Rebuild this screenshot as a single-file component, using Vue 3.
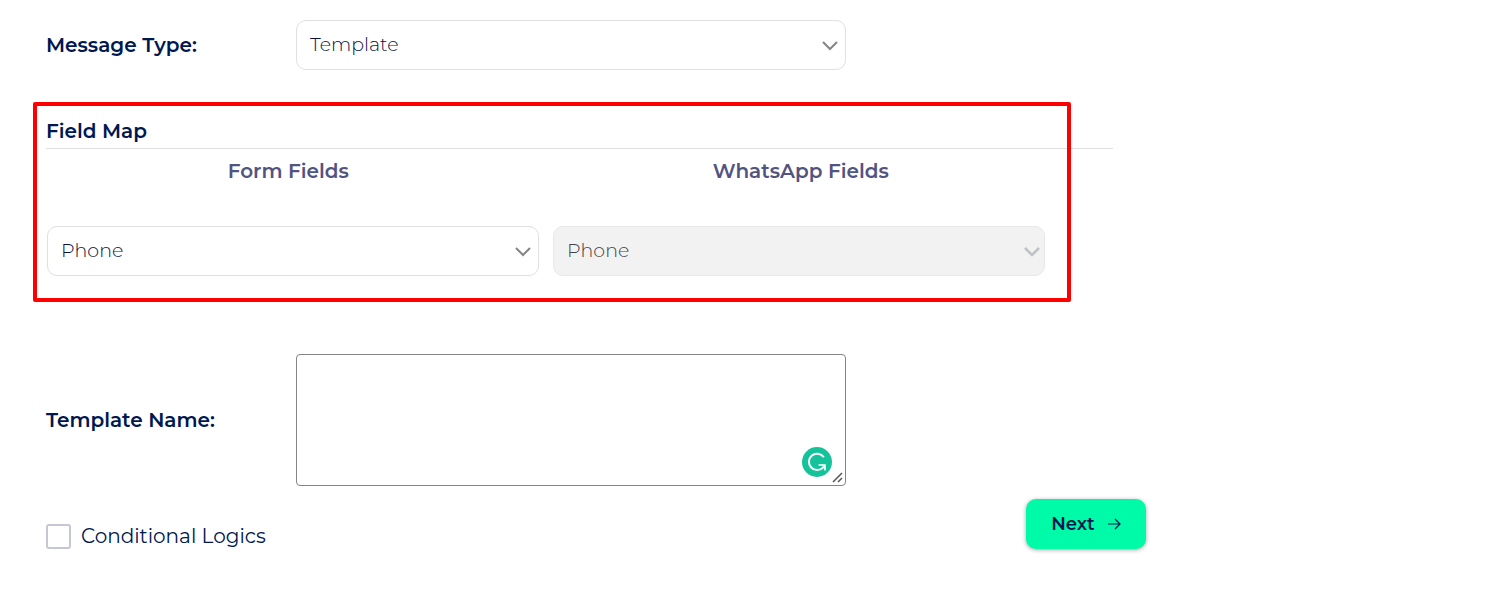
<script setup>
import { ref } from 'vue'

const messageType = ref('template')
const formField = ref('phone')
const whatsappField = ref('phone')
const templateName = ref('')
const conditional = ref(false)
</script>

<template>
  <form class="page" @submit.prevent>
    <div class="row">
      <label class="label" for="message-type">Message Type:</label>
      <div class="control">
        <select id="message-type" v-model="messageType" class="select">
          <option value="template">Template</option>
        </select>
        <svg class="chevron" viewBox="0 0 16 10" aria-hidden="true"><path d="M1 1l7 7 7-7" /></svg>
      </div>
    </div>

    <section class="map">
      <h2 class="title">Field Map</h2>
      <div class="heads">
        <label for="form-field">Form Fields</label>
        <label for="whatsapp-field">WhatsApp Fields</label>
      </div>
      <div class="pair">
        <div class="control">
          <select id="form-field" v-model="formField" class="select">
            <option value="phone">Phone</option>
          </select>
          <svg class="chevron" viewBox="0 0 16 10" aria-hidden="true"><path d="M1 1l7 7 7-7" /></svg>
        </div>
        <div class="control">
          <select id="whatsapp-field" v-model="whatsappField" class="select" disabled>
            <option value="phone">Phone</option>
          </select>
          <svg class="chevron muted" viewBox="0 0 16 10" aria-hidden="true"><path d="M1 1l7 7 7-7" /></svg>
        </div>
      </div>
      <div class="highlight"></div>
    </section>

    <div class="row name-row">
      <label class="label" for="template-name">Template Name:</label>
      <div class="control">
        <textarea id="template-name" v-model="templateName" class="area"></textarea>
        <svg class="badge" viewBox="0 0 30 30" aria-hidden="true">
          <circle cx="15" cy="15" r="15" fill="#15c39a" />
          <path d="M21.4 9.6A8.2 8.2 0 1 0 21 20.6" fill="none" stroke="#fff" stroke-width="2" stroke-linecap="round" />
          <path d="M16.5 18H23v5.5" fill="none" stroke="#fff" stroke-width="1.6" />
          <path d="M19.5 18H23v4z" fill="#fff" />
        </svg>
        <svg class="grip" viewBox="0 0 12 12" aria-hidden="true"><path d="M1 10l9-9M6 10l4-4" /></svg>
      </div>
    </div>

    <div class="footer">
      <label class="check">
        <input v-model="conditional" type="checkbox" />
        <span>Conditional Logics</span>
      </label>
      <button class="next" type="submit">
        Next
        <svg viewBox="0 0 14 14" aria-hidden="true"><path d="M1 7h12M8 2l5 5-5 5" /></svg>
      </button>
    </div>
  </form>
</template>

<style>
body {
  background: #fff;
}
</style>

<style scoped>
.page {
  box-sizing: border-box;
  max-width: 1146px;
  padding: 20px 0 32px 32px;
  font-family: Montserrat, Inter, "Open Sans", sans-serif;
  font-size: 20px;
  line-height: 24px;
  color: #00174f;
}
.row {
  display: grid;
  grid-template-columns: 250px minmax(0, 550px);
  align-items: center;
  padding-left: 14px;
}
.label {
  font-weight: 600;
}
.control {
  position: relative;
}
.select {
  display: block;
  box-sizing: border-box;
  width: 100%;
  height: 50px;
  padding: 0 36px 0 13px;
  border: 1px solid #e0e0e0;
  border-radius: 10px;
  background: #fff;
  color: #0c1238;
  font: inherit;
  font-size: 19px;
  font-weight: 300;
  appearance: none;
}
.select:disabled {
  border-color: #e8e8e8;
  background: #f2f2f2;
  color: #444;
  opacity: 1;
}
.chevron {
  position: absolute;
  top: 21px;
  right: 8px;
  width: 16px;
  height: 10px;
  fill: none;
  stroke: #858585;
  stroke-width: 2;
  pointer-events: none;
}
.chevron.muted {
  right: 5px;
  stroke: #bfc2c7;
  stroke-width: 2.5;
}
.map {
  position: relative;
  margin-top: 32px;
  padding: 16px 33px 26px 14px;
}
.title {
  margin: 0;
  padding-bottom: 4px;
  border-bottom: 1px solid #e0e0e0;
  font-size: 20px;
  font-weight: 600;
  line-height: 26px;
}
.heads {
  display: grid;
  grid-template-columns: 1fr 1fr;
  margin: 10px 56px 0 -14px;
  color: #53537f;
  font-weight: 600;
  text-align: center;
}
.pair {
  display: grid;
  grid-template-columns: 1fr 1fr;
  gap: 14px;
  margin: 43px 68px 0 1px;
}
.highlight {
  position: absolute;
  inset: 0 75px 0 1px;
  border: 4px solid #f00;
  border-radius: 2px;
  pointer-events: none;
}
.name-row {
  margin-top: 52px;
}
.area {
  display: block;
  box-sizing: border-box;
  width: 100%;
  height: 132px;
  padding: 10px;
  border: 1px solid #858585;
  border-radius: 4px;
  background: #fff;
  color: inherit;
  font: inherit;
  resize: none;
}
.badge {
  position: absolute;
  right: 14px;
  bottom: 9px;
  width: 30px;
  height: 30px;
}
.grip {
  position: absolute;
  right: 2px;
  bottom: 2px;
  width: 12px;
  height: 12px;
  fill: none;
  stroke: #555;
  stroke-width: 1.5;
}
.footer {
  display: flex;
  align-items: flex-end;
  justify-content: space-between;
  margin-top: 13px;
  padding-left: 14px;
}
.check {
  display: flex;
  align-items: flex-start;
  gap: 10px;
  font-weight: 400;
}
.check input {
  box-sizing: border-box;
  width: 25px;
  height: 25px;
  margin: 0;
  border: 2px solid #c5c8d4;
  border-radius: 3px;
  background: #fff;
  appearance: none;
}
.check input:checked {
  background: #00fba8;
}
.next {
  display: flex;
  align-items: center;
  justify-content: center;
  gap: 12px;
  width: 120px;
  height: 50px;
  padding: 0;
  border: 0;
  border-radius: 10px;
  background: #00fba8;
  box-shadow: 0 1px 4px rgba(0, 0, 0, 0.35);
  color: #00174f;
  font: inherit;
  font-size: 18px;
  font-weight: 600;
}
.next svg {
  width: 14px;
  height: 14px;
  fill: none;
  stroke: #00174f;
  stroke-width: 1.2;
}
</style>
